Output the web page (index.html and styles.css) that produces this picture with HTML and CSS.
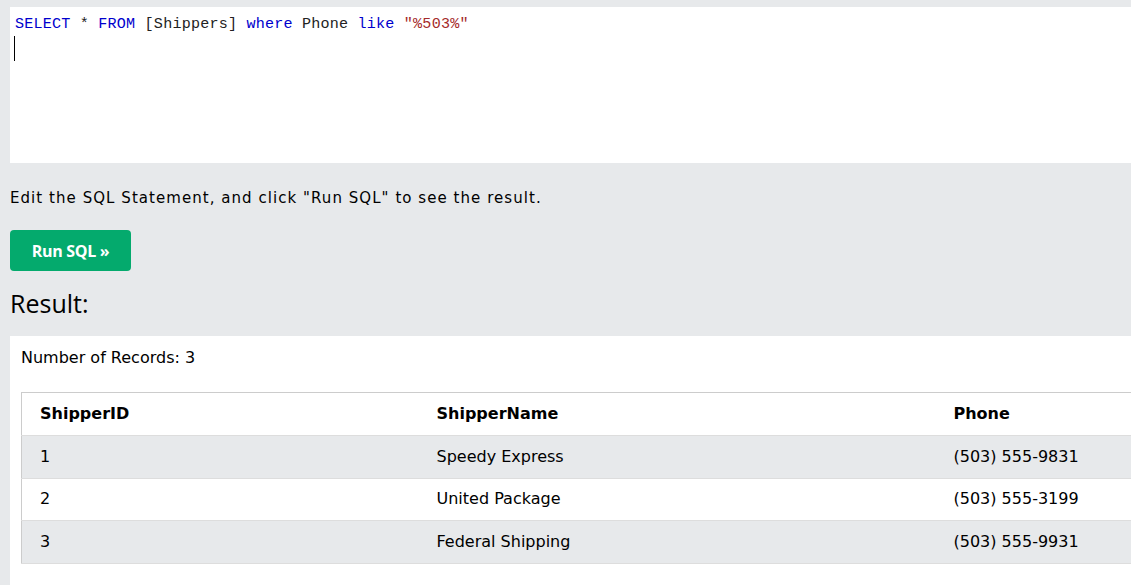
FILE: index.html
```html
<!DOCTYPE html>
<html>
<head>
<meta charset="utf-8">
<link rel="stylesheet" href="styles.css">
</head>
<body>
<div class="page">
  <div class="editor">
    <div class="code"><span class="kw">SELECT</span> * <span class="kw">FROM</span> [Shippers] <span class="kw">where</span> Phone <span class="kw">like</span> <span class="str">"%503%"</span></div>
    <div class="caret"></div>
  </div>
  <p class="hint">Edit the SQL Statement, and click "Run SQL" to see the result.</p>
  <button class="run">Run SQL »</button>
  <h2 class="result-title">Result:</h2>
  <div class="result">
    <div class="count">Number of Records: 3</div>
    <table class="grid">
      <tr><th class="c1">ShipperID</th><th class="c2">ShipperName</th><th>Phone</th></tr>
      <tr><td>1</td><td>Speedy Express</td><td>(503) 555-9831</td></tr>
      <tr><td>2</td><td>United Package</td><td>(503) 555-3199</td></tr>
      <tr><td>3</td><td>Federal Shipping</td><td>(503) 555-9931</td></tr>
    </table>
  </div>
</div>
</body>
</html>
```
FILE: styles.css
```css
html, body {
  margin: 0;
  padding: 0;
  background: #e7e9eb;
  overflow: hidden;
}
.page {
  width: 1200px;
  padding: 7px 0 0 10px;
  font-family: "DejaVu Sans", Verdana, sans-serif;
  color: #000;
}
.editor {
  background: #fff;
  height: 156px;
  padding: 8px 0 0 5px;
  box-sizing: border-box;
}
.code {
  font-family: "Liberation Mono", monospace;
  font-size: 15.1px;
  line-height: 18px;
  letter-spacing: 0.2px;
  color: #222;
  white-space: pre;
}
.kw { color: #0000cd; }
.str { color: #a52a2a; }
.caret {
  width: 1px;
  height: 25px;
  background: #000;
  margin: 3px 0 0 -1px;
}
.hint {
  margin: 25px 0 0 0;
  font-size: 15px;
  line-height: 20px;
  letter-spacing: 1.05px;
}
.run {
  display: block;
  margin-top: 22px;
  width: 121px;
  height: 41px;
  border: 0;
  border-radius: 4px;
  background: #04aa6d;
  color: #fff;
  font-family: "Open Sans", sans-serif;
  font-weight: 700;
  font-size: 16px;
  letter-spacing: -0.3px;
  padding: 0;
}
.result-title {
  margin: 17px 0 0 0;
  font-family: "Open Sans", sans-serif;
  font-weight: 400;
  font-size: 25px;
  line-height: 30px;
}
.result {
  background: #fff;
  margin-top: 18px;
  padding: 12px 0 30px 11px;
}
.count {
  font-size: 16px;
  line-height: 20px;
}
.grid {
  margin-top: 24px;
  border-collapse: collapse;
  width: 100%;
  border: 1px solid #ccc;
  font-size: 16px;
  line-height: 20px;
}
.grid th, .grid td {
  text-align: left;
  padding: 0 18px;
  height: 42.5px;
  box-sizing: border-box;
  border-bottom: 1px solid #ddd;
}
.grid th { font-weight: bold; height: 43px; }
.grid .c1 { width: 397px; }
.grid .c2 { width: 517px; }
.grid tr:nth-child(even) { background: #e7e9eb; }
```
